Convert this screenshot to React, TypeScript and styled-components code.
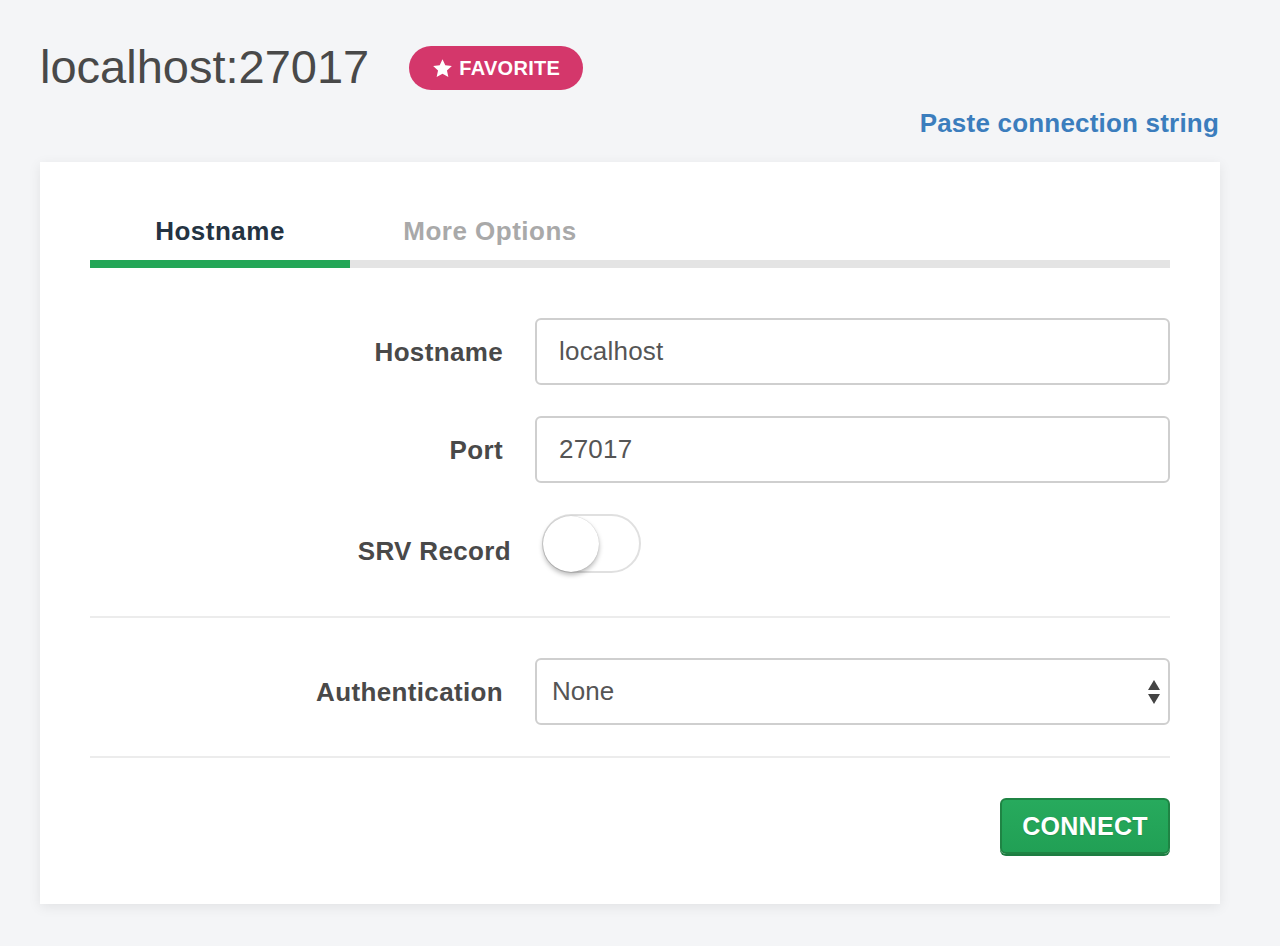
import React from "react";
import styled, { createGlobalStyle } from "styled-components";

const GlobalStyle = createGlobalStyle`
  html, body {
    margin: 0;
    padding: 0;
    background: #f4f5f7;
    font-family: "Liberation Sans", Arial, sans-serif;
  }
  * { box-sizing: border-box; }
`;

const Page = styled.div`
  width: 1280px;
  min-height: 946px;
  padding: 46px 60px 0 40px;
  background: #f4f5f7;
`;

const Header = styled.div`
  display: flex;
  align-items: center;
  height: 44px;
  gap: 40px;
`;

const Title = styled.h1`
  margin: 0;
  font-size: 47px;
  line-height: 44px;
  font-weight: 400;
  color: #494949;
  position: relative;
  top: -1px;
`;

const FavoriteBadge = styled.button`
  display: inline-flex;
  align-items: center;
  gap: 6px;
  height: 44px;
  padding: 0 23px 0 23px;
  border: none;
  border-radius: 22px;
  background: #d4376b;
  color: #fff;
  font-family: "Liberation Sans", Arial, sans-serif;
  font-weight: 700;
  font-size: 20px;
  letter-spacing: 0.3px;
`;

const LinkRow = styled.div`
  display: flex;
  justify-content: flex-end;
  margin-top: 18px;
`;

const PasteLink = styled.a`
  font-size: 26px;
  line-height: 30px;
  font-weight: 700;
  letter-spacing: 0.2px;
  color: #3b7dbd;
  text-decoration: none;
  margin-right: 1px;
`;

const Card = styled.div`
  margin-top: 24px;
  background: #ffffff;
  padding: 54px 50px 50px;
  box-shadow: 0 3px 12px rgba(0, 0, 0, 0.08);
`;

const TabList = styled.div`
  display: flex;
`;

const Tab = styled.div<{ $active?: boolean; $width: number }>`
  width: ${(p) => p.$width}px;
  text-align: center;
  font-size: 26px;
  line-height: 30px;
  font-weight: 700;
  letter-spacing: 0.5px;
  padding-bottom: 14px;
  color: ${(p) => (p.$active ? "#243342" : "#a9a9a9")};
  border-bottom: 8px solid ${(p) => (p.$active ? "#24a657" : "#e4e4e4")};
`;

const TabFiller = styled.div`
  flex: 1;
  border-bottom: 8px solid #e4e4e4;
`;

const Section = styled.div<{ $top: number; $bottom: number }>`
  display: flex;
  flex-direction: column;
  gap: 31px;
  padding-top: ${(p) => p.$top}px;
  padding-bottom: ${(p) => p.$bottom}px;
`;

const Divider = styled.div`
  height: 2px;
  background: #ececec;
`;

const Row = styled.div`
  display: grid;
  grid-template-columns: 413px 1fr;
  column-gap: 32px;
  align-items: center;
`;

const Label = styled.label<{ $shift?: number }>`
  text-align: right;
  font-size: 26px;
  line-height: 30px;
  font-weight: 700;
  letter-spacing: 0.35px;
  color: #494949;
  margin-right: ${(p) => -(p.$shift || 0)}px;
  position: relative;
  top: ${(p) => (p.$shift ? 7 : 0)}px;
`;

const TextInput = styled.div`
  height: 67px;
  border: 2px solid #cfcfcf;
  border-radius: 6px;
  padding: 0 22px;
  display: flex;
  align-items: center;
  font-size: 26px;
  letter-spacing: 0.2px;
  color: #555;
`;

const SelectBox = styled.div`
  position: relative;
  height: 67px;
  border: 2px solid #cfcfcf;
  border-radius: 6px;
  padding: 0 15px;
  display: flex;
  align-items: center;
  font-size: 26px;
  color: #555;
`;

const SelectArrows = styled.svg`
  position: absolute;
  right: 7px;
  top: 50%;
  transform: translateY(-50%);
`;

const ToggleTrack = styled.div`
  margin-left: 7px;
  width: 99px;
  height: 59px;
  border-radius: 30px;
  border: 2px solid #e0e0e0;
  background: #fff;
  position: relative;
`;

const ToggleKnob = styled.div`
  position: absolute;
  left: -1px;
  top: 0px;
  width: 56px;
  height: 56px;
  border-radius: 50%;
  background: #fff;
  box-shadow: 0 3px 5px rgba(0, 0, 0, 0.28), 0 0 1px rgba(0, 0, 0, 0.25);
`;

const Footer = styled.div`
  display: flex;
  justify-content: flex-end;
  padding-top: 40px;
`;

const ConnectButton = styled.button`
  width: 170px;
  height: 56px;
  border: 2px solid #1f8444;
  border-radius: 6px;
  background: linear-gradient(#27aa5d, #21a055);
  color: #fff;
  font-family: "Liberation Sans", Arial, sans-serif;
  font-weight: 700;
  font-size: 25px;
  letter-spacing: 0.3px;
  text-shadow: 0 1px 1px rgba(0, 0, 0, 0.12);
  box-shadow: 0 2px 0 #1d7d42;
`;

const Star = () => (
  <svg width="21" height="21" viewBox="0 0 24 24" fill="#fff">
    <path d="M12 1.5l3.2 6.9 7.5.8-5.6 5.1 1.6 7.4L12 17.9l-6.7 3.8 1.6-7.4L1.3 9.2l7.5-.8z" />
  </svg>
);

export default function App() {
  return (
    <Page>
      <GlobalStyle />
      <Header>
        <Title>localhost:27017</Title>
        <FavoriteBadge>
          <Star />
          FAVORITE
        </FavoriteBadge>
      </Header>
      <LinkRow>
        <PasteLink href="#">Paste connection string</PasteLink>
      </LinkRow>
      <Card>
        <TabList>
          <Tab $active $width={260}>Hostname</Tab>
          <Tab $width={280}>More Options</Tab>
          <TabFiller />
        </TabList>
        <Section $top={50} $bottom={43}>
          <Row>
            <Label>Hostname</Label>
            <TextInput>localhost</TextInput>
          </Row>
          <Row>
            <Label>Port</Label>
            <TextInput>27017</TextInput>
          </Row>
          <Row>
            <Label $shift={8}>SRV Record</Label>
            <ToggleTrack>
              <ToggleKnob />
            </ToggleTrack>
          </Row>
        </Section>
        <Divider />
        <Section $top={40} $bottom={31}>
          <Row>
            <Label>Authentication</Label>
            <SelectBox>
              None
              <SelectArrows width="14" height="26" viewBox="0 0 14 26">
                <path d="M7 1 L13 11 L1 11 Z" fill="#444" />
                <path d="M1 15 L13 15 L7 25 Z" fill="#444" />
              </SelectArrows>
            </SelectBox>
          </Row>
        </Section>
        <Divider />
        <Footer>
          <ConnectButton>CONNECT</ConnectButton>
        </Footer>
      </Card>
    </Page>
  );
}
